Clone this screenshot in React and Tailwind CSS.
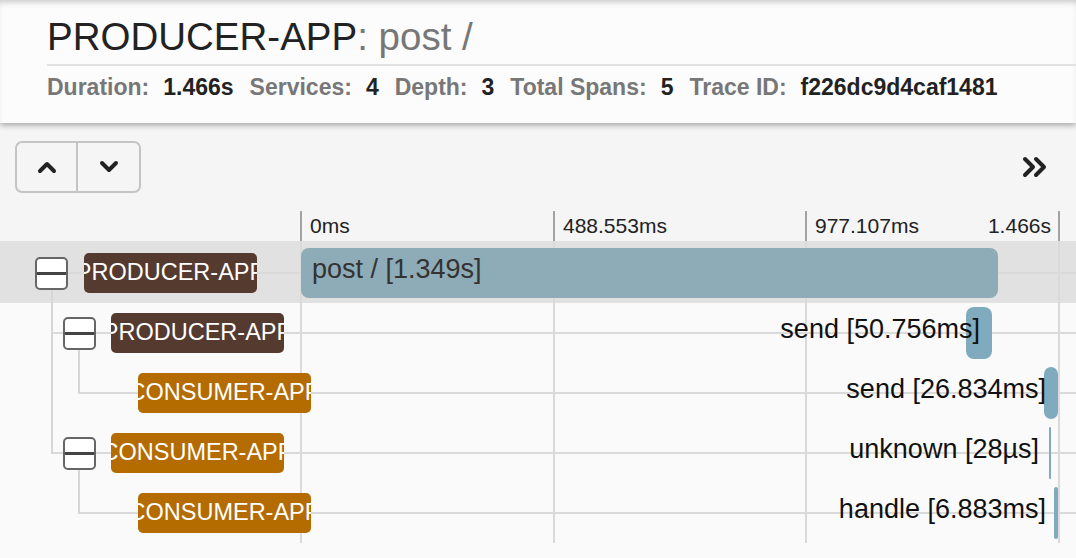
import React from "react";

const TIMELINE_WIDTH = 758;

const spans = [
  { id: 1, depth: 0, service: "PRODUCER-APP", name: "post / [1.349s]", left: 0, width: 697, expandable: true, selected: true, inside: true },
  { id: 2, depth: 1, service: "PRODUCER-APP", name: "send [50.756ms]", left: 665, width: 26, expandable: true, labelEnd: 679 },
  { id: 3, depth: 2, service: "CONSUMER-APP", name: "send [26.834ms]", left: 743, width: 14, labelEnd: 745 },
  { id: 4, depth: 1, service: "CONSUMER-APP", name: "unknown [28µs]", left: 748, width: 2, expandable: true, labelEnd: 738 },
  { id: 5, depth: 2, service: "CONSUMER-APP", name: "handle [6.883ms]", left: 753, width: 4, labelEnd: 745 },
];

const ticks = [
  { id: "t0", x: 0, label: "0ms" },
  { id: "t1", x: 253, label: "488.553ms" },
  { id: "t2", x: 505, label: "977.107ms" },
  { id: "t3", x: 758, label: "1.466s", right: true },
];

// where each row's horizontal guide starts (parent node centre)
const lineStart = ["left-[52px]", "left-[51px]", "left-[78px]", "left-[51px]", "left-[78px]"];

const serviceColor = {
  "PRODUCER-APP": "bg-[#553a30]",
  "CONSUMER-APP": "bg-[#b46c00]",
};

const stats = [
  { label: "Duration:", value: "1.466s" },
  { label: "Services:", value: "4" },
  { label: "Depth:", value: "3" },
  { label: "Total Spans:", value: "5" },
  { label: "Trace ID:", value: "f226dc9d4caf1481" },
];

const ExpandBox = () => (
  <div className="w-[33px] h-[33px] shrink-0 border-2 border-[#666] rounded-[5px] bg-white flex items-center">
    <div className="w-full h-[3px] bg-[#444]" />
  </div>
);

const ChevronUp = () => (
  <svg width="20" height="14" viewBox="0 0 20 14">
    <polyline points="3,11 10,4 17,11" fill="none" stroke="#222" strokeWidth="4" strokeLinecap="round" strokeLinejoin="round" />
  </svg>
);

const ChevronDown = () => (
  <svg width="20" height="14" viewBox="0 0 20 14">
    <polyline points="3,3 10,10 17,3" fill="none" stroke="#222" strokeWidth="4" strokeLinecap="round" strokeLinejoin="round" />
  </svg>
);

const DoubleChevron = () => (
  <svg width="28" height="22" viewBox="0 0 28 22">
    <polyline points="3,3 11,11 3,19" fill="none" stroke="#222" strokeWidth="4" strokeLinecap="round" strokeLinejoin="round" />
    <polyline points="14,3 22,11 14,19" fill="none" stroke="#222" strokeWidth="4" strokeLinecap="round" strokeLinejoin="round" />
  </svg>
);

const SpanRow = ({ span, index }) => {
  const boxMargin = span.depth === 0 ? "ml-[35px]" : "ml-[63px]";
  const badgeMargin = span.expandable
    ? span.depth === 0
      ? "ml-[16px]"
      : "ml-[15px]"
    : "ml-[138px]";

  return (
    <div className={span.selected ? "bg-[#e1e1e1] pt-[2px]" : ""}>
      <div className="relative h-[60px] flex">
        <div className={`absolute ${lineStart[index]} right-0 top-[29px] h-[2px] bg-[#dadada]`} />

        <div className="relative z-20 w-[301px] shrink-0 flex items-center">
          {span.expandable && (
            <div className={boxMargin}>
              <ExpandBox />
            </div>
          )}
          <div
            className={`${badgeMargin} ${serviceColor[span.service]} w-[173px] h-[40px] shrink-0 rounded-[5px] overflow-hidden flex items-center justify-center`}
          >
            <span className="whitespace-nowrap text-white text-[23.5px] leading-none">
              {span.service}
            </span>
          </div>
        </div>

        <div className="relative z-10 w-[758px] shrink-0">
          <div
            className={`absolute ${
              span.selected
                ? "top-[5px] h-[50px] bg-[#8eacb7] rounded-[8px]"
                : span.width < 8
                ? "top-[4px] h-[52px] bg-[#80aabd] rounded-full"
                : "top-[4px] h-[52px] bg-[#80aabd] rounded-[8px]"
            }`}
            style={{
              left: `${(span.left / TIMELINE_WIDTH) * 100}%`,
              width: `${(span.width / TIMELINE_WIDTH) * 100}%`,
            }}
          />
          {span.inside ? (
            <span className="absolute left-[11px] top-[13px] text-[27px] leading-[27px] text-[#333] whitespace-nowrap">
              {span.name}
            </span>
          ) : (
            <span
              className="absolute top-[13px] text-[27px] leading-[27px] text-[#111] whitespace-nowrap"
              style={{ right: `${TIMELINE_WIDTH - span.labelEnd}px` }}
            >
              {span.name}
            </span>
          )}
        </div>
      </div>
    </div>
  );
};

const App = () => {
  return (
    <div className="min-h-screen bg-[#fafafa] font-['Liberation_Sans',Arial,sans-serif] text-[#222] overflow-hidden">
      <header className="relative z-30 h-[123px] bg-[#fcfcfc] pl-[47px] shadow-[inset_0_5px_6px_-3px_rgba(0,0,0,0.22),0_2px_6px_rgba(0,0,0,0.35)]">
        <div className="pt-[18px] pb-[8px] border-b-2 border-[#e2e2e2] text-[38.5px] leading-[38px] whitespace-nowrap">
          <span className="text-[#222]">PRODUCER-APP</span>
          <span className="text-[#777]">: post /</span>
        </div>
        <div className="mt-[10px] flex items-center text-[23px] leading-[23px] font-bold whitespace-nowrap">
          {stats.map((s) => (
            <div key={s.label} className="flex mr-[16px]">
              <span className="text-[#777]">{s.label}</span>
              <span className="ml-[14px] text-[#222]">{s.value}</span>
            </div>
          ))}
        </div>
      </header>

      <div className="bg-[#f5f5f5]">
        <div className="flex items-center justify-between pl-[15px] pr-[26px] pt-[18px]">
          <div className="flex h-[52px] border-2 border-[#c4c4c4] rounded-[7px] overflow-hidden">
            <button className="w-[61px] flex items-center justify-center border-r-2 border-[#c4c4c4]">
              <ChevronUp />
            </button>
            <button className="w-[61px] flex items-center justify-center">
              <ChevronDown />
            </button>
          </div>
          <DoubleChevron />
        </div>

        <div className="relative h-[30px] mt-[18px] ml-[301px] w-[758px]">
          {ticks.map((t) => (
            <div
              key={t.id}
              className="absolute top-0 bottom-0 w-[2px] -ml-px bg-[#a3a3a3]"
              style={{ left: `${t.x}px` }}
            />
          ))}
          {ticks.map((t) =>
            t.right ? (
              <span key={t.id + "l"} className="absolute right-[8px] top-[4px] text-[21px] leading-[21px] text-[#222]">
                {t.label}
              </span>
            ) : (
              <span
                key={t.id + "l"}
                className="absolute top-[4px] text-[21px] leading-[21px] text-[#222]"
                style={{ left: `${t.x + 9}px` }}
              >
                {t.label}
              </span>
            )
          )}
        </div>
      </div>

      <div className="relative">
        {/* grid lines */}
        {ticks.map((t) => (
          <div
            key={t.id + "g"}
            className="absolute top-0 bottom-0 w-[2px] -ml-px bg-[#dadada] z-[5]"
            style={{ left: `${301 + t.x}px` }}
          />
        ))}
        {/* tree connectors */}
        <div className="absolute left-[51px] top-[48px] h-[164px] w-[2px] bg-[#d6d6d6] z-[5]" />
        <div className="absolute left-[78px] top-[108px] h-[44px] w-[2px] bg-[#d6d6d6] z-[5]" />
        <div className="absolute left-[78px] top-[229px] h-[44px] w-[2px] bg-[#d6d6d6] z-[5]" />

        {spans.map((span, i) => (
          <SpanRow key={span.id} span={span} index={i} />
        ))}
      </div>
    </div>
  );
};

export default App;
